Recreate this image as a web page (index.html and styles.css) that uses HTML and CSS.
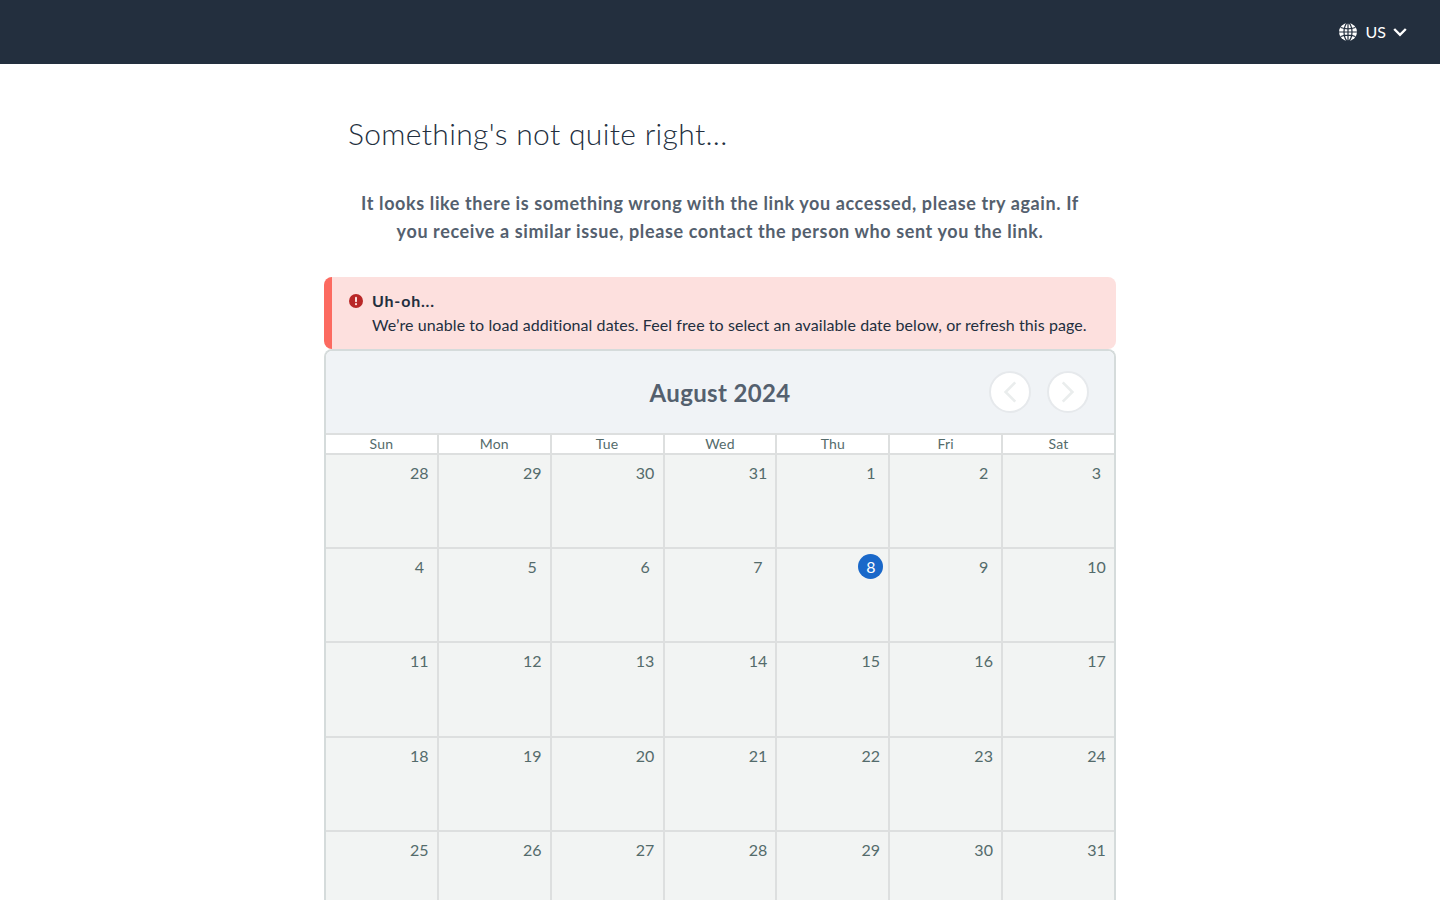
FILE: index.html
```html
<!DOCTYPE html>
<html lang="en">
<head>
  <meta charset="UTF-8">
  <title>Something's not quite right</title>
  <link rel="stylesheet" href="styles.css">
</head>
<body>
  <header class="topbar">
    <button class="locale" type="button">
      <svg class="globe" viewBox="0 0 18 18" width="18" height="18" aria-hidden="true">
        <circle cx="9" cy="9" r="9" fill="#fff"/>
        <g fill="none" stroke="#232f3e" stroke-width="1.200">
          <ellipse cx="9" cy="9" rx="4" ry="9"/>
          <path d="M9 0v18M1.700 4.500q7.300 2.600 14.600 0M1.700 13.500q7.300-2.600 14.600 0M0 9h18"/>
        </g>
      </svg>
      <span class="locale-name">US</span>
      <svg class="chevron" viewBox="0 0 14 10" width="14" height="10" aria-hidden="true">
        <path d="M1.200 2l5.800 5.800L12.800 2" fill="none" stroke="#fff" stroke-width="2.400"/>
      </svg>
    </button>
  </header>

  <main class="content">
    <h1 class="title">Something's not quite right...</h1>
    <p class="intro">It looks like there is something wrong with the link you accessed, please try again. If you receive a similar issue, please contact the person who sent you the link.</p>

    <div class="alert">
      <svg class="alert-icon" viewBox="0 0 14 14" width="14" height="14" aria-hidden="true">
        <circle cx="7" cy="7" r="7" fill="#b92727"/>
        <rect x="6" y="2.800" width="2" height="5.400" rx="1" fill="#fde0de"/>
        <circle cx="7" cy="10.200" r="1.100" fill="#fde0de"/>
      </svg>
      <div>
        <div class="alert-title">Uh-oh...</div>
        <div class="alert-text">We’re unable to load additional dates. Feel free to select an available date below, or refresh this page.</div>
      </div>
    </div>

    <section class="calendar">
      <div class="cal-head">
        <h2 class="month">August 2024</h2>
        <div class="cal-nav">
          <button class="nav-btn" type="button" aria-label="Previous month">
            <svg viewBox="0 0 16 26" width="14" height="24"><path d="M14 2L3 13l11 11" fill="none" stroke="#eaeded" stroke-width="3"/></svg>
          </button>
          <button class="nav-btn" type="button" aria-label="Next month">
            <svg viewBox="0 0 16 26" width="14" height="24"><path d="M2 2l11 11L2 24" fill="none" stroke="#eaeded" stroke-width="3"/></svg>
          </button>
        </div>
      </div>

      <div class="weekdays">
        <div>Sun</div><div>Mon</div><div>Tue</div><div>Wed</div><div>Thu</div><div>Fri</div><div>Sat</div>
      </div>

      <div class="days">
        <div class="day"><span class="num">28</span></div><div class="day"><span class="num">29</span></div><div class="day"><span class="num">30</span></div><div class="day"><span class="num">31</span></div><div class="day"><span class="num">1</span></div><div class="day"><span class="num">2</span></div><div class="day"><span class="num">3</span></div>
        <div class="day"><span class="num">4</span></div><div class="day"><span class="num">5</span></div><div class="day"><span class="num">6</span></div><div class="day"><span class="num">7</span></div><div class="day"><span class="num today">8</span></div><div class="day"><span class="num">9</span></div><div class="day"><span class="num">10</span></div>
        <div class="day"><span class="num">11</span></div><div class="day"><span class="num">12</span></div><div class="day"><span class="num">13</span></div><div class="day"><span class="num">14</span></div><div class="day"><span class="num">15</span></div><div class="day"><span class="num">16</span></div><div class="day"><span class="num">17</span></div>
        <div class="day"><span class="num">18</span></div><div class="day"><span class="num">19</span></div><div class="day"><span class="num">20</span></div><div class="day"><span class="num">21</span></div><div class="day"><span class="num">22</span></div><div class="day"><span class="num">23</span></div><div class="day"><span class="num">24</span></div>
        <div class="day"><span class="num">25</span></div><div class="day"><span class="num">26</span></div><div class="day"><span class="num">27</span></div><div class="day"><span class="num">28</span></div><div class="day"><span class="num">29</span></div><div class="day"><span class="num">30</span></div><div class="day"><span class="num">31</span></div>
      </div>
    </section>
  </main>
</body>
</html>
```

FILE: styles.css
```css
html, body {
  margin: 0;
  background-color: #fff;
  font-family: Lato, "Noto Sans", Arial, sans-serif;
  color: #232f3e;
}

/* Top bar */
.topbar {
  height: 64px;
  display: flex;
  justify-content: flex-end;
  align-items: center;
  padding: 0 33px;
  background-color: #232f3e;
}

.locale {
  display: flex;
  align-items: center;
  gap: 9px;
  padding: 0;
  border: none;
  background: none;
  color: #fff;
  font: inherit;
  font-size: 16px;
}

.locale-name {
  margin-top: -2px;
}

.chevron {
  margin-left: -2px;
}

/* Page content */
.content {
  width: 792px;
  margin: 0 auto;
}

.title {
  margin: 0;
  padding: 51px 24px 0;
  font-size: 30px;
  line-height: 36px;
  font-weight: 300;
  letter-spacing: 0.33px;
}

.intro {
  margin: 0;
  padding: 38px 24px 32px;
  text-align: center;
  font-size: 18px;
  line-height: 28px;
  font-weight: 700;
  letter-spacing: 0.61px;
  color: #54606e;
}

/* Error alert */
.alert {
  display: flex;
  gap: 9px;
  height: 72px;
  box-sizing: border-box;
  padding: 12px 16px 12px 17px;
  background-color: #fde0de;
  border-left: 8px solid #fc6a60;
  border-radius: 8px;
  font-size: 16px;
  line-height: 24px;
}

.alert-icon {
  margin-top: 5px;
  flex-shrink: 0;
}

.alert-title {
  font-weight: 700;
  letter-spacing: 0.8px;
}

.alert-text {
  letter-spacing: 0.075px;
}

/* Calendar */
.calendar {
  border: 2px solid #d5dbdb;
  border-bottom: none;
  border-radius: 8px 8px 0 0;
}

.cal-head {
  position: relative;
  height: 82px;
  display: flex;
  justify-content: center;
  align-items: center;
  background-color: #f0f3f6;
  border-radius: 6px 6px 0 0;
}

.month {
  margin: 0;
  font-size: 24px;
  font-weight: 700;
  letter-spacing: 0.35px;
  color: #54606e;
}

.cal-nav {
  position: absolute;
  top: 20px;
  right: 25px;
  display: flex;
  gap: 16px;
}

.nav-btn {
  width: 42px;
  height: 42px;
  display: flex;
  justify-content: center;
  align-items: center;
  padding: 0;
  background-color: #fff;
  border: 2px solid #e6e9ec;
  border-radius: 50%;
}

.weekdays,
.days {
  display: grid;
  grid-template-columns: repeat(7, 1fr);
  column-gap: 2px;
  background-color: #dddfdf;
}

.weekdays {
  padding: 2px 0;
  font-size: 14px;
  line-height: 18px;
  letter-spacing: 0.2px;
  text-align: center;
  color: #546b6b;
}

.weekdays div {
  background-color: #fff;
}

.days {
  row-gap: 2px;
  font-size: 16px;
  color: #546b6b;
}

.day {
  height: 92.200px;
  box-sizing: border-box;
  display: flex;
  justify-content: flex-end;
  align-items: flex-start;
  padding: 5px 5px 0 0;
  line-height: 25px;
  background-color: #f2f4f3;
}

.num {
  width: 25px;
  height: 25px;
  text-align: center;
  border-radius: 50%;
}

.today {
  background-color: #1a68c9;
  color: #fff;
}
```
